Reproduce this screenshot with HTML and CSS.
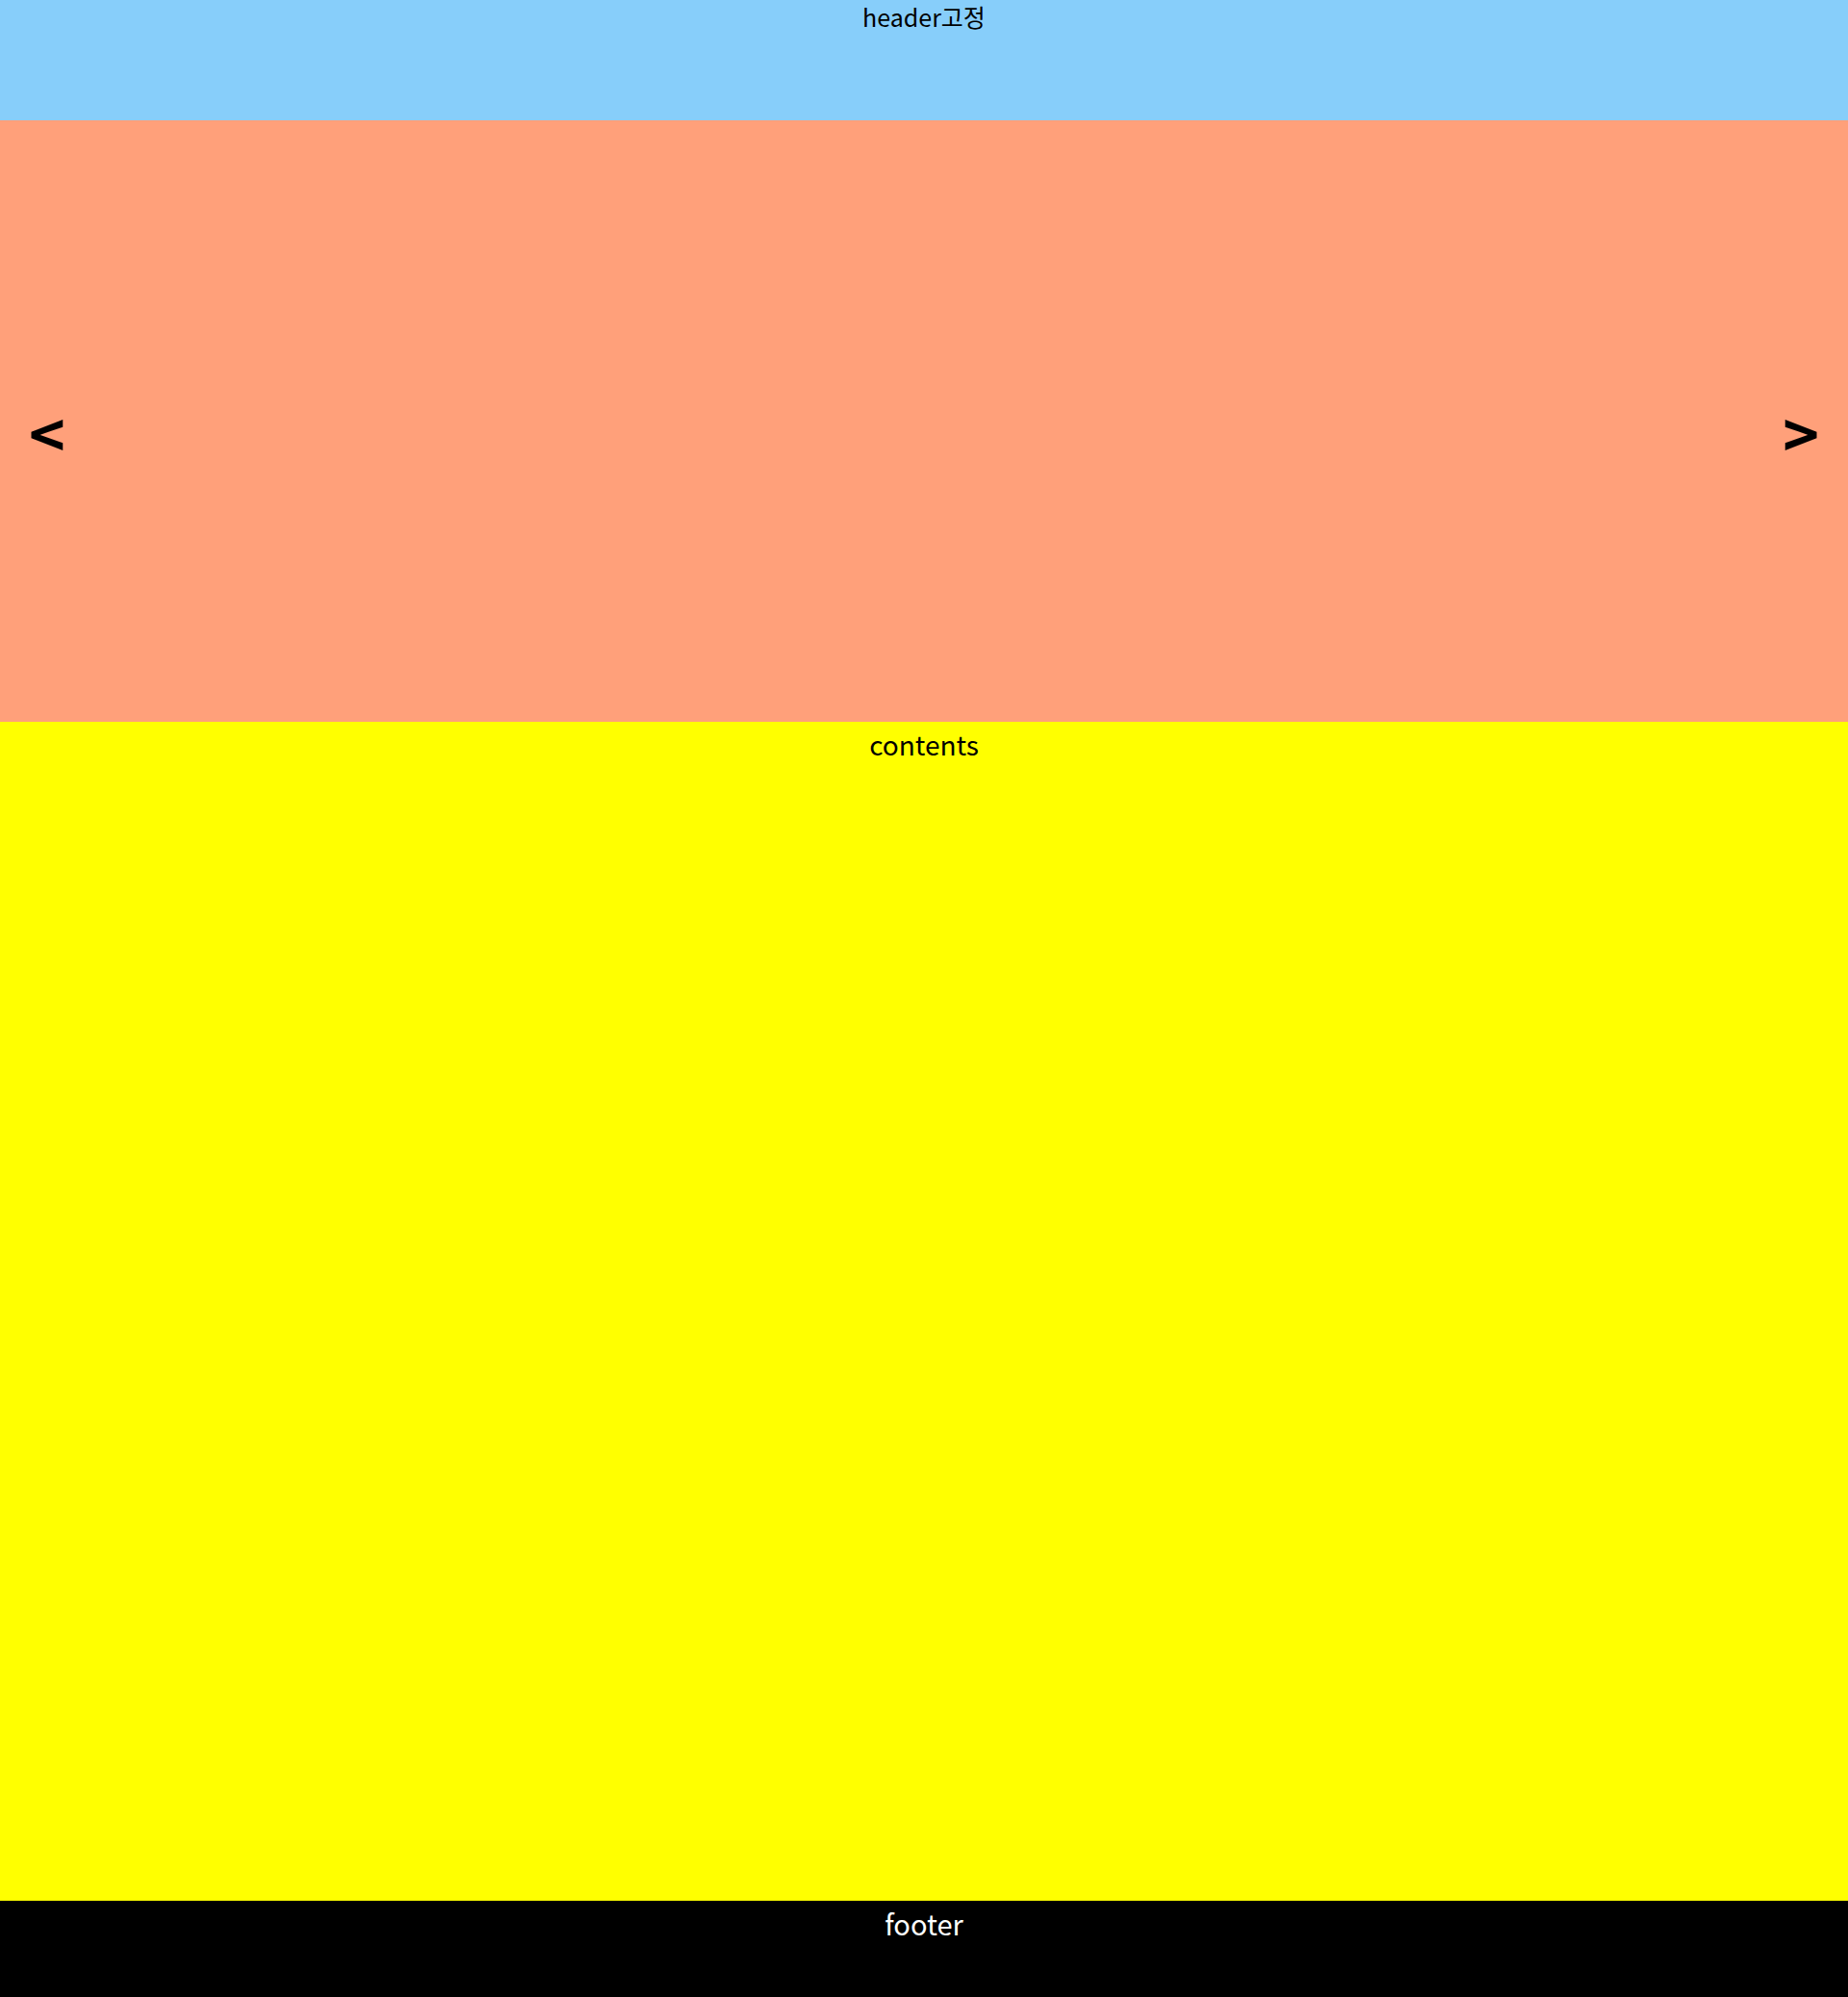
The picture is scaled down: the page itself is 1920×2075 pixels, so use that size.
FILE: index.html
```html
<!DOCTYPE html>
<html lang="ko">
<head>
<meta charset="utf-8">
<title>Layout</title>
<link rel="stylesheet" href="styles.css">
</head>
<body>
<header class="header">header고정</header>
<section class="slider">
  <span class="arrow">&lt;</span>
  <span class="arrow">&gt;</span>
</section>
<main class="contents">contents</main>
<footer class="footer">footer</footer>
</body>
</html>
```
FILE: styles.css
```css
html, body {
  margin: 0;
  padding: 0;
}
body {
  font-family: "Noto Sans CJK KR", "Open Sans", sans-serif;
  color: #000;
}
.header {
  height: 125px;
  background: #87cefa;
  text-align: center;
  font-size: 25px;
  line-height: 34px;
}
.slider {
  height: 625px;
  background: #ffa07a;
  display: flex;
  justify-content: space-between;
  align-items: center;
  padding: 20px 30px 0;
  box-sizing: border-box;
}
.arrow {
  font-size: 64px;
  font-weight: bold;
  line-height: 1;
}
.contents {
  display: block;
  height: 1225px;
  background: #ffff00;
  text-align: center;
  font-size: 28px;
  line-height: 46px;
}
.footer {
  height: 100px;
  background: #000;
  color: #fff;
  text-align: center;
  font-size: 29px;
  line-height: 46px;
}
```
